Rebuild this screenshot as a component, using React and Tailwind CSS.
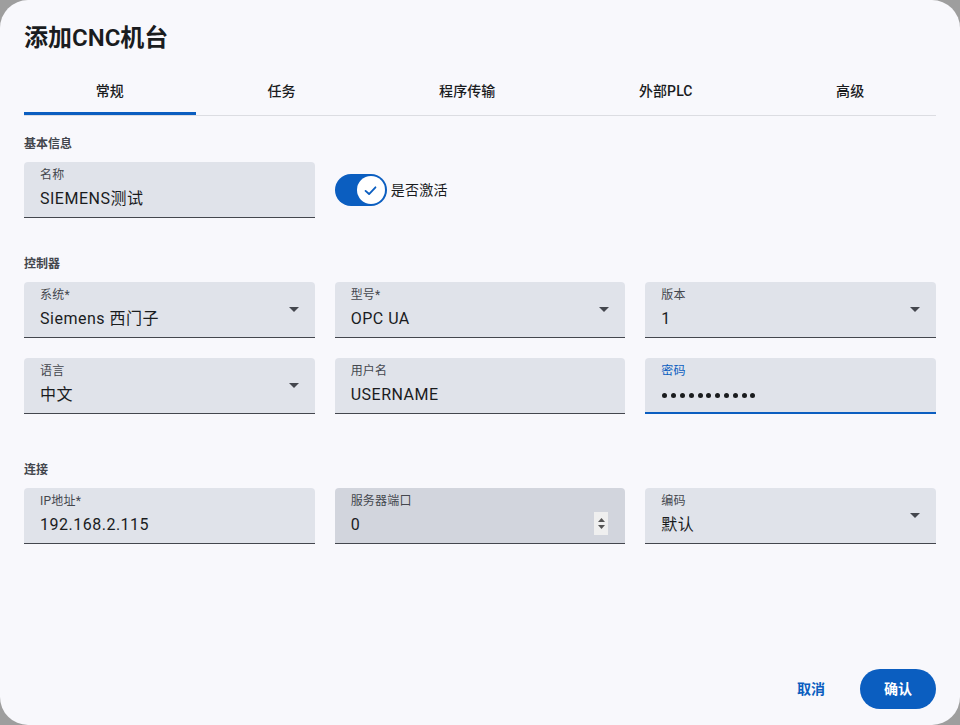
import React from "react";

const FONT = { fontFamily: 'Roboto, "Noto Sans CJK SC", "Noto Sans", sans-serif' };

function Caret() {
  return (
    <svg width="10" height="5" viewBox="0 0 10 5" className="absolute right-[16px] top-[25px]">
      <path d="M0 0 L10 0 L5 5 Z" fill="#44474e" />
    </svg>
  );
}

function Field({ label, value, select, focused, hovered, spin, password }) {
  return (
    <div
      className={`relative h-[56px] rounded-t-[4px] px-4 flex flex-col ${
        hovered ? "bg-[#d2d5dd]" : "bg-[#e0e3ea]"
      } ${focused ? "border-b-2 border-[#0b5ec0]" : "border-b border-[#44474e]"}`}
    >
      <div
        className={`mt-[5px] h-4 text-[12px] leading-4 tracking-[0.2px] ${
          focused ? "text-[#0b5ec0]" : "text-[#44474e]"
        }`}
      >
        {label}
      </div>
      {password ? (
        <div className="mt-[4px] h-6 flex items-center gap-[3.8px] pl-[1px]">
          {Array.from({ length: 11 }).map((_, i) => (
            <span key={i} className="block w-[5px] h-[5px] rounded-full bg-[#1a1c1e]" />
          ))}
        </div>
      ) : (
        <div className="mt-[4px] h-6 text-[16px] leading-6 tracking-[0.5px] text-[#1a1c1e]">{value}</div>
      )}
      {select && <Caret />}
      {spin && (
        <div className="absolute right-[17px] top-[24px] w-[14px] h-[23px] bg-[#efefef] flex flex-col items-center justify-center gap-[3px]">
          <svg width="7" height="4" viewBox="0 0 7 4">
            <path d="M0 4 L7 4 L3.5 0 Z" fill="#555" />
          </svg>
          <svg width="7" height="4" viewBox="0 0 7 4">
            <path d="M0 0 L7 0 L3.5 4 Z" fill="#555" />
          </svg>
        </div>
      )}
    </div>
  );
}

function SectionTitle({ children, className }) {
  return (
    <div className={`h-4 text-[12px] leading-4 font-bold text-[#43464d] ${className}`}>{children}</div>
  );
}

export default function App() {
  const tabs = ["常规", "任务", "程序传输", "外部PLC", "高级"];
  return (
    <div className="w-[960px] h-[725px] bg-[#9e9e9e]" style={FONT}>
      <div className="w-full h-full rounded-[28px] bg-[#f8f8fc] flex flex-col px-6 pb-4">
        <div className="mt-[22px] h-8 text-[24px] leading-8 font-semibold text-[#1a1c1e]">
          添加CNC机台
        </div>
        <div className="mt-[13px] flex border-b border-[#dcdde2]">
          {tabs.map((t, i) => (
            <div
              key={t}
              className="relative grow h-12 flex items-center justify-center text-[14px] font-medium tracking-[0.1px] text-[#1a1c1e]"
            >
              {t}
              {i === 0 && <div className="absolute left-0 right-0 bottom-0 h-[3px] bg-[#0b5ec0]" />}
            </div>
          ))}
        </div>

        <SectionTitle className="mt-[20px]">基本信息</SectionTitle>
        <div className="mt-[10px] grid grid-cols-3 gap-x-5">
          <Field label="名称" value="SIEMENS测试" />
          <div className="flex items-center gap-1">
            <div className="relative w-[52px] h-[32px] rounded-full bg-[#0b5ec0]">
              <div className="absolute right-[2px] top-[2px] w-[28px] h-[28px] rounded-full bg-white flex items-center justify-center">
                <svg width="17" height="17" viewBox="0 0 24 24" fill="none">
                  <path d="M5 12.5 L10 17 L19 7.5" stroke="#0b5ec0" strokeWidth="2.6" strokeLinecap="round" strokeLinejoin="round" />
                </svg>
              </div>
            </div>
            <span className="text-[14px] tracking-[0.25px] text-[#1a1c1e]">是否激活</span>
          </div>
        </div>

        <SectionTitle className="mt-[38px]">控制器</SectionTitle>
        <div className="mt-[10px] grid grid-cols-3 gap-x-5 gap-y-5">
          <Field label="系统*" value="Siemens 西门子" select />
          <Field label="型号*" value="OPC UA" select />
          <Field label="版本" value="1" select />
          <Field label="语言" value="中文" select />
          <Field label="用户名" value="USERNAME" />
          <Field label="密码" focused password />
        </div>

        <SectionTitle className="mt-[48px]">连接</SectionTitle>
        <div className="mt-[10px] grid grid-cols-3 gap-x-5">
          <Field label="IP地址*" value="192.168.2.115" />
          <Field label="服务器端口" value="0" hovered spin />
          <Field label="编码" value="默认" select />
        </div>

        <div className="mt-auto flex justify-end items-center gap-[23px]">
          <button className="h-10 px-3 rounded-full text-[14px] font-bold text-[#0b5ec0]">取消</button>
          <button className="h-10 px-6 rounded-full bg-[#0b5ec0] text-[14px] font-bold text-white">确认</button>
        </div>
      </div>
    </div>
  );
}
